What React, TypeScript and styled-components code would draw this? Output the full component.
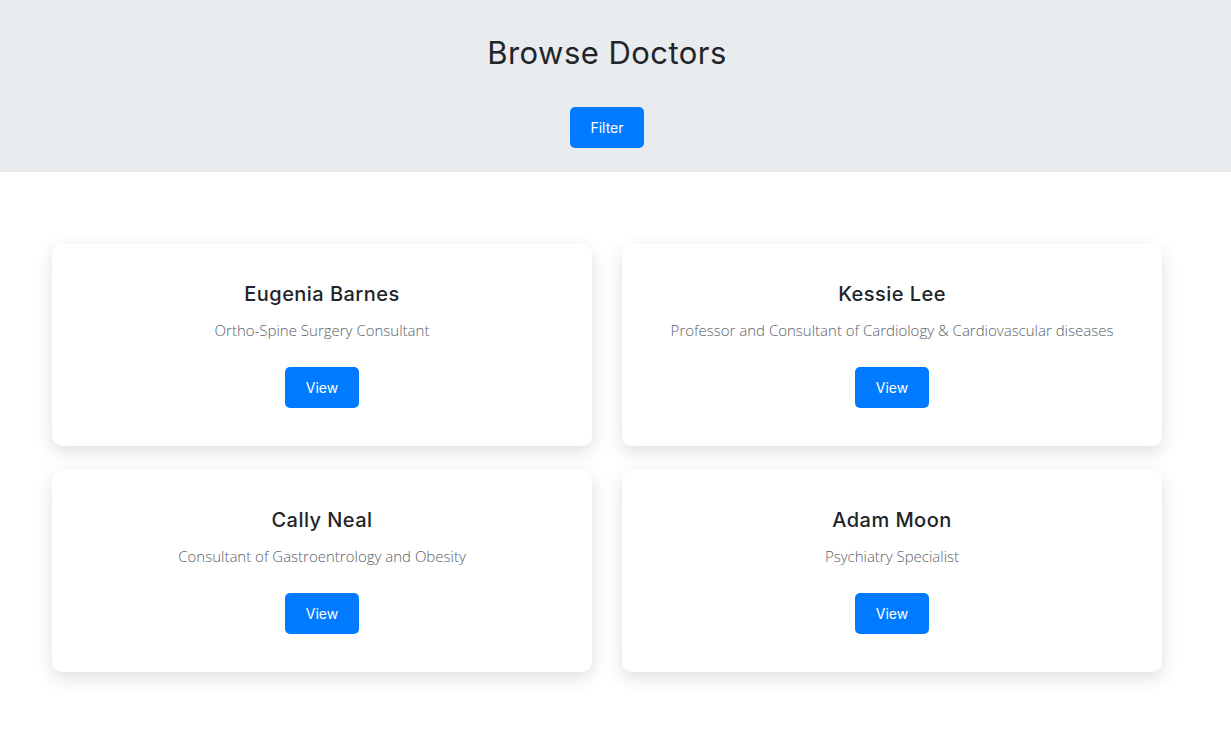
import React from "react";
import styled, { createGlobalStyle } from "styled-components";

const Global = createGlobalStyle`
  html, body { margin: 0; padding: 0; background: #fff; }
  body { font-family: Inter, "Noto Sans", sans-serif; color: #212529; }
  * { box-sizing: border-box; }
`;

const Header = styled.header`
  background: #e9ecef;
  height: 172px;
  padding-right: 17px;
  display: flex;
  flex-direction: column;
  align-items: center;
`;

const Title = styled.h1`
  margin: 33px 0 0;
  font-family: Inter, sans-serif;
  font-weight: 400;
  font-size: 31px;
  line-height: 40px;
  color: #212529;
  letter-spacing: 0.45px;
`;

const Button = styled.button`
  width: 74px;
  height: 41px;
  border: none;
  border-radius: 5px;
  background: #007bff;
  color: #fff;
  font-family: Inter, sans-serif;
  font-size: 14px;
  font-weight: 400;
  cursor: pointer;
`;

const FilterButton = styled(Button)`
  margin-top: 34px;
`;

const Main = styled.main`
  padding: 72px 17px 60px 0;
  display: flex;
  justify-content: center;
`;

const Grid = styled.div`
  width: 1110px;
  display: grid;
  grid-template-columns: 540px 540px;
  column-gap: 30px;
  row-gap: 24px;
`;

const Card = styled.div`
  background: #fff;
  border-radius: 10px;
  height: 202px;
  box-shadow: 0 6px 18px rgba(0, 0, 0, 0.13);
  display: flex;
  flex-direction: column;
  align-items: center;
  padding-top: 38px;
`;

const Name = styled.h2`
  margin: 0;
  font-family: Inter, sans-serif;
  font-weight: 500;
  font-size: 20px;
  line-height: 24px;
  color: #212529;
  letter-spacing: 0.45px;
`;

const Desc = styled.p`
  margin: 14px 0 0;
  font-family: "Open Sans", sans-serif;
  font-weight: 300;
  font-size: 15px;
  line-height: 20px;
  color: #5a6168;
`;

const ViewButton = styled(Button)`
  margin-top: 27px;
`;

const doctors = [
  { name: "Eugenia Barnes", desc: "Ortho-Spine Surgery Consultant" },
  { name: "Kessie Lee", desc: "Professor and Consultant of Cardiology & Cardiovascular diseases" },
  { name: "Cally Neal", desc: "Consultant of Gastroentrology and Obesity" },
  { name: "Adam Moon", desc: "Psychiatry Specialist" },
];

export default function App() {
  return (
    <>
      <Global />
      <Header>
        <Title>Browse Doctors</Title>
        <FilterButton>Filter</FilterButton>
      </Header>
      <Main>
        <Grid>
          {doctors.map((d) => (
            <Card key={d.name}>
              <Name>{d.name}</Name>
              <Desc>{d.desc}</Desc>
              <ViewButton>View</ViewButton>
            </Card>
          ))}
        </Grid>
      </Main>
    </>
  );
}
